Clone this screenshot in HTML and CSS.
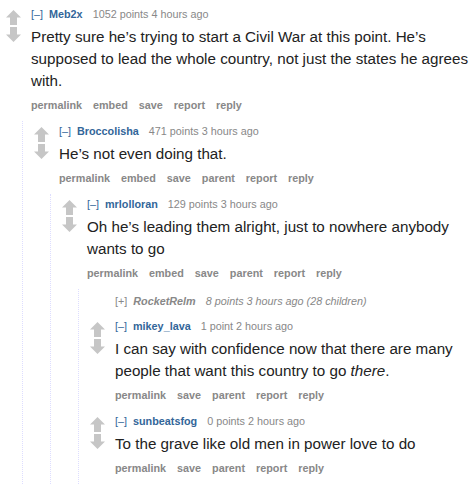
FILE: index.html
```html
<!DOCTYPE html>
<html lang="en">
<head>
    <meta charset="UTF-8">
    <meta name="viewport" content="width=device-width, initial-scale=1.0">
    <title>Comments</title>
    <link rel="stylesheet" href="styles.css">
</head>
<body>
    <div class="thing">
        <div class="main">
            <div class="midcol">
                <svg class="arrow" viewBox="0 0 15 15"><path d="M7.5 0 L15 7.5 L11 7.5 L11 15 L4 15 L4 7.5 L0 7.5 Z"/></svg>
                <svg class="arrow" viewBox="0 0 15 15"><path d="M7.5 15 L15 7.5 L11 7.5 L11 0 L4 0 L4 7.5 L0 7.5 Z"/></svg>
            </div>
            <div class="entry">
                <p class="tagline"><a class="expand">[–]</a><a class="author">Meb2x</a><span>1052 points 4 hours ago</span></p>
                <div class="md"><p>Pretty sure he’s trying to start a Civil War at this point. He’s supposed to lead the whole country, not just the states he agrees with.</p></div>
                <ul class="buttons">
                    <li>permalink</li><li>embed</li><li>save</li><li>report</li><li>reply</li>
                </ul>
            </div>
        </div>
        <div class="child">
            <div class="thing">
                <div class="main">
                    <div class="midcol">
                        <svg class="arrow" viewBox="0 0 15 15"><path d="M7.5 0 L15 7.5 L11 7.5 L11 15 L4 15 L4 7.5 L0 7.5 Z"/></svg>
                        <svg class="arrow" viewBox="0 0 15 15"><path d="M7.5 15 L15 7.5 L11 7.5 L11 0 L4 0 L4 7.5 L0 7.5 Z"/></svg>
                    </div>
                    <div class="entry">
                        <p class="tagline"><a class="expand">[–]</a><a class="author">Broccolisha</a><span>471 points 3 hours ago</span></p>
                        <div class="md"><p>He’s not even doing that.</p></div>
                        <ul class="buttons">
                            <li>permalink</li><li>embed</li><li>save</li><li>parent</li><li>report</li><li>reply</li>
                        </ul>
                    </div>
                </div>
                <div class="child">
                    <div class="thing">
                        <div class="main">
                            <div class="midcol">
                                <svg class="arrow" viewBox="0 0 15 15"><path d="M7.5 0 L15 7.5 L11 7.5 L11 15 L4 15 L4 7.5 L0 7.5 Z"/></svg>
                                <svg class="arrow" viewBox="0 0 15 15"><path d="M7.5 15 L15 7.5 L11 7.5 L11 0 L4 0 L4 7.5 L0 7.5 Z"/></svg>
                            </div>
                            <div class="entry">
                                <p class="tagline"><a class="expand">[–]</a><a class="author">mrlolloran</a><span>129 points 3 hours ago</span></p>
                                <div class="md"><p>Oh he’s leading them alright, just to nowhere anybody wants to go</p></div>
                                <ul class="buttons">
                                    <li>permalink</li><li>embed</li><li>save</li><li>parent</li><li>report</li><li>reply</li>
                                </ul>
                            </div>
                        </div>
                        <div class="child">
                            <div class="thing collapsed">
                                <div class="main">
                                    <div class="midcol"></div>
                                    <div class="entry">
                                        <p class="tagline"><a class="expand">[+]</a><a class="author">RocketRelm</a><span>8 points 3 hours ago (28 children)</span></p>
                                    </div>
                                </div>
                            </div>
                            <div class="thing">
                                <div class="main">
                                    <div class="midcol">
                                        <svg class="arrow" viewBox="0 0 15 15"><path d="M7.5 0 L15 7.5 L11 7.5 L11 15 L4 15 L4 7.5 L0 7.5 Z"/></svg>
                                        <svg class="arrow" viewBox="0 0 15 15"><path d="M7.5 15 L15 7.5 L11 7.5 L11 0 L4 0 L4 7.5 L0 7.5 Z"/></svg>
                                    </div>
                                    <div class="entry">
                                        <p class="tagline"><a class="expand">[–]</a><a class="author">mikey_lava</a><span>1 point 2 hours ago</span></p>
                                        <div class="md"><p>I can say with confidence now that there are many people that want this country to go <em>there</em>.</p></div>
                                        <ul class="buttons">
                                            <li>permalink</li><li>save</li><li>parent</li><li>report</li><li>reply</li>
                                        </ul>
                                    </div>
                                </div>
                            </div>
                            <div class="thing">
                                <div class="main">
                                    <div class="midcol">
                                        <svg class="arrow" viewBox="0 0 15 15"><path d="M7.5 0 L15 7.5 L11 7.5 L11 15 L4 15 L4 7.5 L0 7.5 Z"/></svg>
                                        <svg class="arrow" viewBox="0 0 15 15"><path d="M7.5 15 L15 7.5 L11 7.5 L11 0 L4 0 L4 7.5 L0 7.5 Z"/></svg>
                                    </div>
                                    <div class="entry">
                                        <p class="tagline"><a class="expand">[–]</a><a class="author">sunbeatsfog</a><span>0 points 2 hours ago</span></p>
                                        <div class="md"><p>To the grave like old men in power love to do</p></div>
                                        <ul class="buttons">
                                            <li>permalink</li><li>save</li><li>parent</li><li>report</li><li>reply</li>
                                        </ul>
                                    </div>
                                </div>
                            </div>
                        </div>
                    </div>
                </div>
            </div>
        </div>
    </div>
</body>
</html>
```

FILE: styles.css
```css
body {
    font-family: "Liberation Sans", Arial, sans-serif;
    margin: 0;
    padding: 4px 5px 0 0;
    background-color: #fff;
    color: #222;
}
.thing {
    padding-top: 2px;
}
.main {
    display: flex;
}
.midcol {
    width: 27px;
    flex-shrink: 0;
    padding-top: 2px;
    margin-right: 4px;
}
.arrow {
    display: block;
    width: 15px;
    height: 15px;
    margin: 2px auto 1px;
    fill: #c6c6c6;
}
.entry {
    flex: 1;
}
.tagline {
    margin: 0;
    font-size: 10.8px;
    line-height: 16px;
    color: #888;
}
.expand {
    color: #369;
    margin-right: 6px;
}
.author {
    color: #369;
    font-weight: bold;
    margin-right: 10px;
}
.md {
    margin-top: 4px;
    font-size: 15.2px;
    line-height: 22px;
}
.md p {
    margin: 0;
}
.buttons {
    display: flex;
    gap: 11px;
    list-style: none;
    margin: 5px 0 8px;
    padding: 0;
    font-size: 10.8px;
    line-height: 16px;
    font-weight: bold;
    color: #888;
}
.child {
    margin-left: 22px;
    border-left: 1px dotted #ddf;
    padding-left: 5px;
}
.collapsed {
    padding-top: 4px;
    margin-bottom: 7px;
}
.collapsed .tagline {
    font-style: italic;
    color: #888;
}
.collapsed .expand {
    font-style: normal;
    color: #888;
}
.collapsed .author {
    color: #888;
}
```
